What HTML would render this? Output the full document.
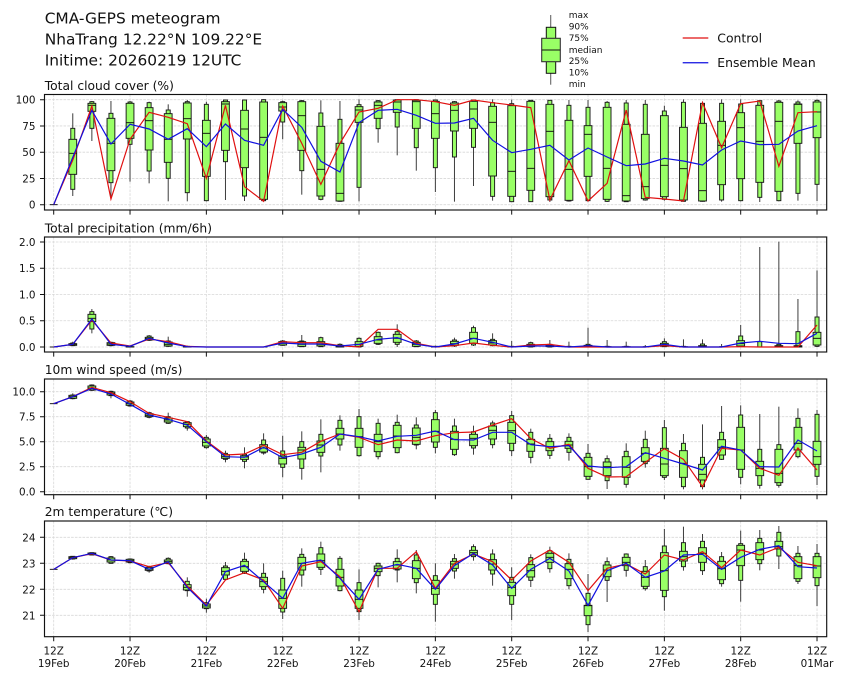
<!DOCTYPE html>
<html><head><meta charset="utf-8"><style>
html,body{margin:0;padding:0;background:#fff;width:845px;height:680px;overflow:hidden}
svg{display:block;filter:blur(.3px)}
text{font-family:"DejaVu Sans","Liberation Sans",sans-serif;fill:#111}
.t{font-size:15.4px}.s{font-size:12.3px}.k{font-size:10.4px}.l{font-size:9px}.g{font-size:12.4px}
</style></head><body>
<svg id="c" xmlns="http://www.w3.org/2000/svg" width="845" height="680" viewBox="0 0 845 680">
<g id="grid"></g><g id="boxes"></g><g id="lines"></g><g id="frames"></g>
<text class="t" x="44.7" y="23.3">CMA-GEPS meteogram</text>
<text class="t" x="44.7" y="44.3">NhaTrang 12.22°N 109.22°E</text>
<text class="t" x="44.7" y="65.3">Initime: 20260219 12UTC</text>
<text class="s" x="44.7" y="90">Total cloud cover (%)</text>
<text class="s" x="44.7" y="232.5">Total precipitation (mm/6h)</text>
<text class="s" x="44.7" y="374">10m wind speed (m/s)</text>
<text class="s" x="44.7" y="516">2m temperature (℃)</text>
<g class="l">
<text x="568.7" y="18.2">max</text><text x="568.7" y="29.7">90%</text><text x="568.7" y="41.2">75%</text><text x="568.7" y="52.8">median</text><text x="568.7" y="64.2">25%</text><text x="568.7" y="75.7">10%</text><text x="568.7" y="87.2">min</text>
</g>
<path d="M550.7 15V84.7" stroke="#666" stroke-width="1.1" fill="none"/>
<rect x="546.3" y="27.3" width="9.4" height="46" fill="#99ff66" stroke="#111" stroke-width="1"/>
<rect x="541.7" y="38.3" width="18.6" height="23.4" fill="#99ff66" stroke="#333" stroke-width="1.1"/>
<path d="M541.7 50H560.3" stroke="#111" stroke-width="1.1"/>
<path d="M682.7 38H708.3" stroke="#e01010" stroke-width="1.25"/>
<path d="M682.7 62.7H708.3" stroke="#1010e0" stroke-width="1.25"/>
<text class="g" x="717.3" y="42.3">Control</text>
<text class="g" x="717.3" y="66.8">Ensemble Mean</text>
<g class="k" text-anchor="end">
<text x="35.5" y="103.7">100</text><text x="35.5" y="129.9">75</text><text x="35.5" y="156.2">50</text><text x="35.5" y="182.4">25</text><text x="35.5" y="208.7">0</text>
<text x="35.5" y="246">2.0</text><text x="35.5" y="272.2">1.5</text><text x="35.5" y="298.5">1.0</text><text x="35.5" y="324.7">0.5</text><text x="35.5" y="351">0.0</text>
<text x="35.5" y="395.7">10.0</text><text x="35.5" y="420.7">7.5</text><text x="35.5" y="445.7">5.0</text><text x="35.5" y="470.7">2.5</text><text x="35.5" y="495.7">0.0</text>
<text x="35.5" y="541.3">24</text><text x="35.5" y="567.3">23</text><text x="35.5" y="593.3">22</text><text x="35.5" y="619.3">21</text>
</g>
<g class="k" text-anchor="middle">
<text x="53.7" y="654.5">12Z</text><text x="53.7" y="667">19Feb</text>
<text x="130" y="654.5">12Z</text><text x="130" y="667">20Feb</text>
<text x="206.4" y="654.5">12Z</text><text x="206.4" y="667">21Feb</text>
<text x="282.7" y="654.5">12Z</text><text x="282.7" y="667">22Feb</text>
<text x="359" y="654.5">12Z</text><text x="359" y="667">23Feb</text>
<text x="435.4" y="654.5">12Z</text><text x="435.4" y="667">24Feb</text>
<text x="511.7" y="654.5">12Z</text><text x="511.7" y="667">25Feb</text>
<text x="588" y="654.5">12Z</text><text x="588" y="667">26Feb</text>
<text x="664.4" y="654.5">12Z</text><text x="664.4" y="667">27Feb</text>
<text x="740.7" y="654.5">12Z</text><text x="740.7" y="667">28Feb</text>
<text x="817" y="654.5">12Z</text><text x="817" y="667">01Mar</text>
</g>
</svg>
<script>
var X0=53.7,DX=19.083,L=44.5,R=826.7;
var P=[
{o:0,top:94.5,bot:210,gy:[99.7,125.95,152.2,178.45,204.7],
b:[[614,614,614,614,614,614,614],[340,385,418,460,523,568,588],[303,305,310,316,334,385,423],[303,340,355,430,512,548,590],[303,306,310,368,415,433,545],[305,308,323,362,450,513,550],[313,330,341,418,487,535,604],[300,305,309,356,417,578,604],[305,313,361,400,529,602,604],[299,300,305,312,451,485,600],[299,300,331,387,503,588,603],[298,299,306,412,598,602,604],[302,305,308,321,333,366,418],[300,302,305,347,451,512,584],[301,339,379,508,588,598,601],[303,358,430,580,603,604,605],[298,314,320,330,367,562,604],[300,302,306,316,355,386,428],[298,299,300,306,337,381,466],[299,299,301,305,385,443,512],[299,300,304,341,415,503,576],[303,305,309,331,393,471,605],[299,300,304,327,385,442,558],[298,308,319,367,528,589,602],[299,311,317,514,589,605,606],[300,301,304,505,571,605,606],[300,301,313,394,590,600,606],[300,316,361,508,601,603,605],[300,322,377,403,529,602,605],[303,307,322,505,598,604,606],[300,309,373,587,603,605,606],[300,313,403,560,596,600,602],[317,333,347,496,590,598,602],[298,307,382,506,600,604,605],[305,310,370,572,603,604,605],[298,310,364,436,554,600,605],[298,312,338,383,536,602,604],[300,302,316,424,547,592,606],[300,303,307,364,574,602,604],[301,306,312,313,430,580,602],[299,301,306,336,413,553,603]],
r:[614,480,318,597,418,337,352,371,535,316,560,604,318,430,553,430,336,325,299,299,305,316,300,308,315,323,600,482,603,550,330,592,597,603,308,443,311,303,499,338,335],
m:[614,472,331,432,373,387,418,386,440,372,421,436,328,382,484,516,368,331,328,346,370,369,355,421,458,448,436,480,444,471,497,492,475,483,495,450,423,434,433,393,377]},
{o:225,top:237,bot:352,gy:[242,268.25,294.5,320.75,347],
b:[[366,366,366,366,366,366,366],[350,354,356,358,361,362,363],[252,260,268,280,290,312,325],[350,352,353,357,361,362,364],[364,365,365,366,366,366,366],[330,333,337,341,345,346,348],[335,348,351,358,363,364,366],[362,364,365,366,366,366,366],[366,366,366,366,366,366,366],[366,366,366,366,366,366,366],[366,366,366,366,366,366,366],[366,366,366,366,366,366,366],[345,348,350,355,360,361,362],[330,348,350,358,364,365,366],[335,338,350,358,363,365,366],[355,358,361,364,366,366,366],[337,340,350,358,364,366,367],[320,322,335,345,355,358,360],[298,320,328,340,352,358,366],[345,348,352,358,364,365,366],[362,364,365,366,366,366,366],[338,345,349,356,361,363,366],[302,308,322,340,355,360,363],[325,343,347,354,360,362,364],[348,364,365,366,366,366,366],[350,353,358,362,365,366,367],[345,358,360,363,365,366,367],[350,364,365,366,366,366,366],[308,358,361,364,366,366,366],[345,364,365,366,366,366,366],[350,364,365,366,366,366,366],[360,365,366,366,366,366,366],[340,350,355,360,364,365,366],[343,364,365,366,366,366,366],[343,357,362,364,365,366,366],[357,365,366,366,366,366,366],[300,333,347,356,363,364,366],[66,350,366,366,366,366,366],[50,358,362,364,366,366,366],[222,320,362,364,366,366,366],[136,276,322,340,360,364,366]],
r:[366,358,285,354,363,342,350,364,366,366,366,366,350,353,353,362,366,313,313,355,366,362,354,361,366,360,358,366,366,366,366,366,362,366,366,366,365,366,366,366,300],
m:[366,358,282,358,364,340,354,365,366,366,366,366,354,357,357,363,358,343,338,358,366,357,340,352,366,363,363,366,362,366,366,366,358,366,366,366,354,349,355,356,325]},
{o:360,top:379,bot:494.7,gy:[391.7,416.7,441.7,466.7,491.7],
b:[[131,131,131,131,131,131,131],[100,105,106,110,115,116,118],[73,75,78,84,90,91,93],[92,94,96,100,105,107,115],[120,123,126,131,136,138,140],[155,158,161,166,170,172,175],[158,170,174,180,186,190,192],[183,185,188,193,200,204,212],[225,232,237,247,258,263,266],[272,280,284,290,295,298,307],[262,283,287,291,298,304,325],[220,240,254,264,276,279,284],[227,273,288,295,312,322,352],[214,245,262,270,297,325,359],[178,223,243,255,277,288,337],[166,181,205,222,237,255,272],[147,170,205,230,262,287,290],[176,190,223,245,275,290,298],[164,187,196,228,263,278,280],[172,195,204,232,253,255,268],[150,158,179,214,246,262,280],[176,198,214,238,268,284,288],[197,215,223,235,257,264,284],[182,189,198,211,237,254,265],[153,167,187,212,250,272,288],[206,217,238,252,274,292,310],[222,235,245,260,272,286,297],[220,232,244,255,265,277,302],[252,280,292,320,349,358,358],[286,296,306,320,347,362,387],[250,274,290,322,352,373,383],[212,238,263,280,304,311,323],[180,203,265,312,347,352,360],[222,250,272,310,352,380,388],[193,292,313,343,360,380,388],[138,217,239,262,285,298,300],[136,165,202,270,328,352,373],[162,268,304,325,347,376,386],[140,254,268,340,368,376,383],[145,175,202,250,270,290,295],[150,163,244,290,313,349,375]],
r:[131,110,82,98,125,160,172,185,243,285,282,256,284,277,244,222,232,254,240,243,227,218,216,195,176,236,265,253,325,351,350,307,266,298,380,265,270,325,346,264,330],
m:[131,110,85,102,133,165,178,195,245,290,292,262,293,282,262,222,230,243,229,226,213,239,240,217,217,254,260,257,318,323,320,278,295,312,330,259,270,320,321,240,273]},
{o:500,top:521,bot:636.7,gy:[537.3,563.3,589.3,615.3],
b:[[208,208,208,208,208,208,208],[168,169,170,173,176,177,179],[157,158,159,161,164,165,165],[168,170,174,180,186,190,191],[175,177,178,182,186,188,190],[197,200,202,207,211,213,218],[172,175,180,185,190,191,193],[232,244,254,262,270,272,290],[296,308,312,318,324,326,338],[186,198,203,214,225,238,240],[158,178,184,200,214,220,222],[190,220,232,245,260,268,280],[212,235,270,295,325,336,357],[145,163,172,190,210,225,260],[125,143,162,182,202,208,225],[168,175,208,232,258,272,274],[208,248,270,298,325,335,360],[188,190,198,205,215,227,262],[148,175,185,195,207,210,247],[150,165,182,205,236,248,280],[190,227,241,265,283,313,365],[162,176,184,192,205,213,236],[133,140,151,158,165,170,182],[148,162,179,192,210,222,257],[202,232,247,262,287,313,360],[163,173,194,212,231,241,261],[140,152,160,172,187,206,218],[160,178,191,208,236,257,268],[222,280,316,317,347,374,396],[172,185,195,210,230,241,306],[160,162,172,187,197,211,230],[180,200,214,232,259,266,272],[87,138,158,212,271,290,332],[80,128,154,170,183,200,212],[102,124,143,160,187,212,225],[156,170,184,206,239,251,260],[92,131,136,150,197,241,305],[90,115,128,150,179,191,211],[78,97,124,140,147,168,207],[138,160,170,197,236,244,252],[132,160,170,198,233,257,318]],
r:[208,173,161,180,183,200,188,258,315,240,218,240,325,198,185,230,335,205,205,155,265,190,162,185,240,183,150,187,272,205,192,222,165,180,155,203,150,165,142,187,197],
m:[208,173,160,180,182,208,185,262,318,215,196,245,295,190,180,235,298,208,193,205,268,197,160,195,265,208,175,213,316,212,190,232,213,165,163,208,172,148,137,200,204]}
];
function f(n){return (Math.round(n*100)/100).toString();}
var grid='',boxes='',lines='',frames='';
P.forEach(function(p){
 var Y=function(v){return p.o+v/3;};
 var g='';
 p.gy.forEach(function(y){g+='M'+L+' '+y+'H'+R;});
 for(var d=0;d<=10;d++){var x=f(X0+d*4*DX);g+='M'+x+' '+p.top+'V'+p.bot;}
 grid+='<path d="'+g+'" stroke="#d8d8d8" stroke-width=".8" stroke-dasharray="2.6 1.2" fill="none"/>';
 p.b.forEach(function(a,i){
  var x=X0+i*DX,w=2,W=3.9;
  boxes+='<path d="M'+f(x)+' '+f(Y(a[0]))+'V'+f(Y(a[6]))+'" stroke="#333" stroke-width=".95" fill="none"/>';
  boxes+='<rect x="'+f(x-w)+'" y="'+f(Y(a[1]))+'" width="'+(2*w)+'" height="'+f((a[5]-a[1])/3)+'" fill="#99ff66" stroke="#1a1a1a" stroke-width=".95"/>';
  boxes+='<rect x="'+f(x-W)+'" y="'+f(Y(a[2]))+'" width="'+(2*W)+'" height="'+f((a[4]-a[2])/3)+'" fill="#99ff66" stroke="#1a1a1a" stroke-width=".95"/>';
  boxes+='<path d="M'+f(x-W)+' '+f(Y(a[3]))+'H'+f(x+W)+'" stroke="#111" stroke-width=".95" fill="none"/>';
 });
 var pl=function(arr,c){var s=arr.map(function(v,i){return f(X0+i*DX)+','+f(Y(v));}).join(' ');return '<polyline points="'+s+'" fill="none" stroke="'+c+'" stroke-width="1.2" stroke-linejoin="miter"/>';};
 lines+=pl(p.r,'#e01010')+pl(p.m,'#1010e0');
 var tk='';
 p.gy.forEach(function(y){tk+='M'+(L-4.5)+' '+y+'H'+L;});
 for(var e=0;e<=10;e++){tk+='M'+f(X0+e*4*DX)+' '+p.bot+'V'+(p.bot+4.6);}
 frames+='<path d="'+tk+'" stroke="#111" stroke-width="1" fill="none"/>';
 frames+='<rect x="'+L+'" y="'+p.top+'" width="'+f(R-L)+'" height="'+f(p.bot-p.top)+'" fill="none" stroke="#111" stroke-width="1.15"/>';
});
document.getElementById('grid').innerHTML=grid;
document.getElementById('boxes').innerHTML=boxes;
document.getElementById('lines').innerHTML=lines;
document.getElementById('frames').innerHTML=frames;
</script>
</body></html>
